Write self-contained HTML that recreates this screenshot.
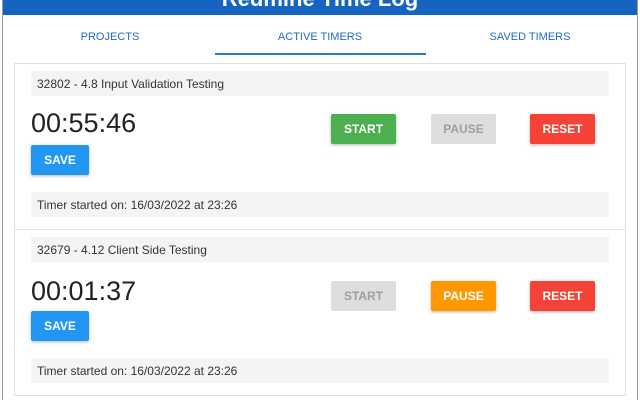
<!DOCTYPE html>
<html><head><meta charset="utf-8"><style>
*{margin:0;padding:0;box-sizing:border-box}
body{width:640px;height:400px;overflow:hidden;background:#fff;font-family:"Liberation Sans",sans-serif;position:relative}
.abs{position:absolute}
.frame{left:2px;top:0;width:636px;height:400px;border-left:1px solid #9a9a9a;border-right:1px solid #9a9a9a}
.hdr{left:3px;top:0;width:634px;height:15px;background:#1565c0;overflow:hidden}
.hdr div{position:absolute;left:0;right:0;top:-14px;text-align:center;color:#fff;font-weight:bold;font-size:22px}
.tab{top:31px;font-size:11px;color:#1e6bc9;text-align:center}
.card{left:14px;top:63px;width:612px;height:333px;border:1px solid #e0e0e0}
.bar{left:31px;width:578px;height:25px;background:#f4f4f4;font-size:12px;color:#333;padding-left:6px;line-height:27px}
.time{left:31px;font-size:27px;color:#222}
.btn{width:65px;height:30px;font-size:12px;font-weight:bold;color:#fff;text-align:center;line-height:30px;border-radius:2px;box-shadow:0 1px 3px rgba(0,0,0,.3)}
.g{background:#4caf50}.d{background:#dedede;color:#9e9e9e;box-shadow:none}.o{background:#ff9800}.r{background:#f44336}.b{background:#2196f3;width:58px}
</style></head><body>
<div class="abs frame"></div>
<div class="abs hdr"><div>Redmine Time Log</div></div>
<div class="abs tab" style="left:60px;width:100px">PROJECTS</div>
<div class="abs tab" style="left:220px;width:200px">ACTIVE TIMERS</div>
<div class="abs tab" style="left:480px;width:100px">SAVED TIMERS</div>
<div class="abs" style="left:215px;top:53px;width:211px;height:2px;background:#2b78d4"></div>
<div class="abs card"></div>
<div class="abs bar" style="top:71px">32802 - 4.8 Input Validation Testing</div>
<div class="abs time" style="top:108px">00:55:46</div>
<div class="abs btn g" style="left:331px;top:114px">START</div>
<div class="abs btn d" style="left:431px;top:114px">PAUSE</div>
<div class="abs btn r" style="left:530px;top:114px">RESET</div>
<div class="abs btn b" style="left:31px;top:145px">SAVE</div>
<div class="abs bar" style="top:192px">Timer started on: 16/03/2022 at 23:26</div>
<div class="abs" style="left:15px;top:229px;width:610px;height:1px;background:#e0e0e0"></div>
<div class="abs bar" style="top:237px">32679 - 4.12 Client Side Testing</div>
<div class="abs time" style="top:276px">00:01:37</div>
<div class="abs btn d" style="left:331px;top:281px">START</div>
<div class="abs btn o" style="left:431px;top:281px">PAUSE</div>
<div class="abs btn r" style="left:530px;top:281px">RESET</div>
<div class="abs btn b" style="left:31px;top:311px">SAVE</div>
<div class="abs bar" style="top:358px">Timer started on: 16/03/2022 at 23:26</div>
</body></html>
